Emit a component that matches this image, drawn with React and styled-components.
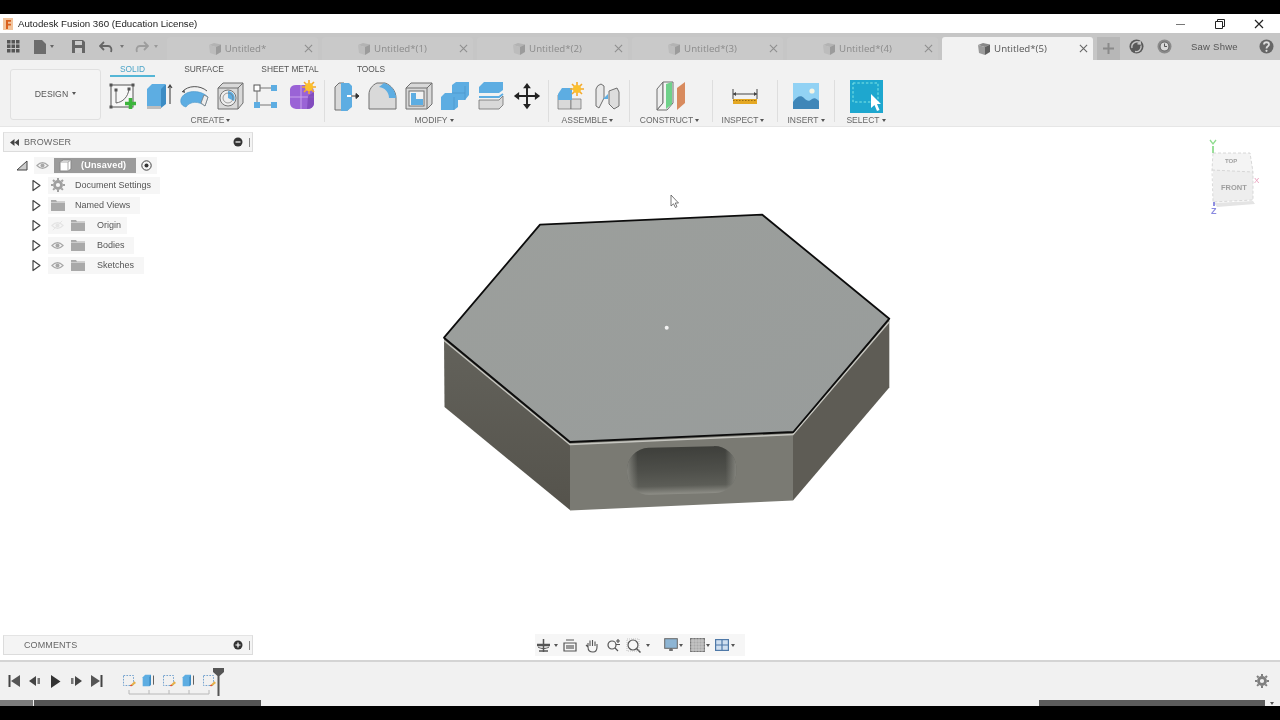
import React from "react";
import styled, { createGlobalStyle } from "styled-components";

const Global = createGlobalStyle`
  html, body { margin: 0; padding: 0; background: #000; overflow: hidden; }
  #root { width: 1280px; height: 720px; }
  * { box-sizing: border-box; }
`;

const Page = styled.div`
  width: 1280px; height: 720px; background: #000; display: flex; flex-direction: column;
  font-family: "Liberation Sans", Arial, sans-serif; filter: blur(0.35px);
`;
const BlackBand = styled.div`height: ${p => p.$h}px; background: #000; flex: none;`;

const TitleBar = styled.header`
  height: 19px; background: #fff; display: flex; align-items: center; padding: 0 0 0 3px; flex: none;
`;
const AppTitle = styled.span`
  font-family: "Liberation Sans", sans-serif; font-size: 9.7px; color: #222; margin-left: 5px; flex: 1;
`;
const WinBtn = styled.button`
  width: 39px; height: 19px; border: 0; padding: 0; background: none; display: flex;
  align-items: center; justify-content: center;
`;
const WinControls = styled.div`display: flex; margin-right: 2px;`;

const TabBar = styled.div`
  height: 27px; background: #c6c6c6; display: flex; align-items: flex-end; flex: none; position: relative;
`;
const QuickTools = styled.div`
  width: 167px; height: 27px; display: flex; align-items: center; padding-left: 7px; flex: none;
`;
const QuickItem = styled.span`display: flex; align-items: center; margin-left: ${p => p.$ml || 0}px;`;
const Tabs = styled.div`display: flex; gap: 4px; align-items: flex-end;`;
const Tab = styled.div`
  width: 151px; height: 23px; border-radius: 3px 3px 0 0;
  background: ${p => (p.$active ? "#f2f2f2" : "#c9c9c9")};
  display: grid; grid-template-columns: 140px 11px; align-items: center;
`;
const TabMain = styled.div`
  display: flex; align-items: center; justify-content: center; gap: 3px;
  font-size: 9.7px; font-family: "Open Sans", sans-serif;
  color: ${p => (p.$active ? "#555" : "#8b8b8b")};
`;
const TabClose = styled.span`display: flex; margin-left: -3px;`;
const PlusBox = styled.div`
  width: 23px; height: 23px; margin-left: 4px; background: #b7b7b7; display: flex;
  align-items: center; justify-content: center;
`;
const RightTools = styled.div`
  flex: 1; height: 27px; display: flex; align-items: center; padding-left: 9px;
`;
const UserName = styled.span`
  font-size: 9.5px; color: #555; letter-spacing: 0.25px; margin-left: 19px; width: 65px;
`;

const Ribbon = styled.section`
  height: 67px; background: #f2f2f2; display: flex; flex: none; border-bottom: 1px solid #e6e6e6;
  padding-left: 10px;
`;
const DesignBox = styled.button`
  width: 91px; height: 51px; margin-top: 9px; margin-right: 3px; background: #f4f4f4;
  border: 1px solid #e0e0e0; border-radius: 3px; display: flex; align-items: center; justify-content: center;
  gap: 4px; font: 8.7px "Liberation Sans", sans-serif; color: #555; padding: 0 0 2px;
`;
const RibbonBody = styled.div`display: flex; flex-direction: column; flex: 1;`;
const RibbonTabs = styled.div`display: flex; height: 17px; padding-left: 6px; margin-top: 2px;`;
const RibbonTab = styled.div`
  width: ${p => p.$w}px; height: 15px; font-size: 8.4px; line-height: 14px; text-align: center;
  color: ${p => (p.$active ? "#4ba4c8" : "#555")}; position: relative;
  ${p => p.$active && "border-bottom: 2px solid #55b6d6;"}
`;
const Groups = styled.div`display: flex; height: 46px; margin-top: 2px;`;
const Group = styled.div`
  width: ${p => p.$w}px; display: flex; flex-direction: column; align-items: center; flex: none;
`;
const GroupIcons = styled.div`display: flex; height: 32px; align-items: center;`;
const ToolSlot = styled.div`width: 36px; height: 32px; display: flex; align-items: center; justify-content: center;`;
const GroupLabel = styled.div`
  display: flex; align-items: center; gap: 2px; font-size: 8.5px; color: #666; margin: 2px ${p => p.$shift || 0}px 0 0;
  height: 12px; white-space: nowrap;
`;
const Caret = styled.i`
  display: inline-block; width: 0; height: 0; border-left: 2.5px solid transparent;
  border-right: 2.5px solid transparent; border-top: 3px solid ${p => p.$c || "#555"};
  margin-left: ${p => p.$ml || 0}px;
`;
const GroupDivider = styled.div`width: 1px; height: 42px; margin: 0 3px; background: #dedede; flex: none;`;

const Viewport = styled.main`
  height: 533px; background: #fff; position: relative; flex: none; display: flex; flex-direction: column;
  justify-content: space-between; padding: 5px 0 5px 3px;
`;
const ModelSvg = styled.svg`position: absolute; left: 0; top: 0; width: 1280px; height: 533px;`;
const PanelBar = styled.div`
  width: 250px; height: 20px; background: #f4f4f4; border: 1px solid #dcdcdc; border-top-color: #e4e4e4;
  display: flex; align-items: center; position: relative; font-size: 9px; color: #666; letter-spacing: 0.1px;
`;
const PanelLead = styled.span`width: 20px; display: flex; justify-content: center;`;
const PanelName = styled.span`flex: 1;`;
const PanelEnd = styled.span`display: flex; align-items: center; gap: 6px;`;
const Grip = styled.i`display: block; width: 1px; height: 9px; background: #888; margin-right: 2px;`;
const BrowserPanel = styled.div`position: relative; width: 250px;`;
const Tree = styled.div`margin-top: 3px; display: flex; flex-direction: column;`;
const TreeRow = styled.div`
  height: 20px; display: flex; align-items: center; padding-left: ${p => p.$indent}px;
`;
const Pill = styled.div`
  height: 17px; width: ${p => p.$w}px; background: #f6f6f6; display: flex; align-items: center;
  font-size: 9px; color: #555; margin-left: ${p => p.$ml}px;
`;
const IconCell = styled.span`width: ${p => p.$w}px; display: flex; justify-content: center; flex: none;`;
const Selected = styled.div`
  width: 82px; height: 15px; margin: 0 2px 0 4px; background: #9b9b9b; display: flex; align-items: center; color: #fff;
  font-weight: bold; font-size: 9px; letter-spacing: 0.2px; flex: none;
`;

const NavBar = styled.div`
  position: absolute; left: 535px; bottom: 4px; width: 210px; height: 22px; background: #f6f6f6;
  display: flex; align-items: center;
`;
const NavItem = styled.span`
  width: ${p => p.$w}px; padding-left: ${p => p.$pl || 0}px; display: flex; align-items: center;
  justify-content: ${p => (p.$pl ? "flex-start" : "center")}; flex: none;
`;
const Cube = styled.svg`position: absolute; left: 1205px; top: 10px; width: 60px; height: 82px; filter: blur(0.6px);`;

const Timeline = styled.footer`
  height: 40px; background: #f1f1f1; border-top: 2px solid #d4d4d4; display: flex; align-items: center; flex: none; padding-left: 4px;
`;
const Player = styled.div`display: flex; width: 114px;`;
const PlayBtn = styled.span`width: 20.7px; display: flex; justify-content: center;`;
const Features = styled.div`position: relative; display: flex; height: 36px; align-items: flex-start; padding-top: 10px;`;
const Feature = styled.span`width: 20px; display: flex; justify-content: center;`;
const Bracket = styled.svg`position: absolute; left: 10px; top: 27px;`;
const Marker = styled.svg`margin-left: -5px; margin-top: -5px;`;
const GearEnd = styled.span`margin-left: auto; margin-right: 11px; display: flex;`;

const ScrollRow = styled.div`height: 6px; background: #f1f1f1; display: flex; align-items: center; flex: none;`;
const Thumb = styled.div`
  width: ${p => p.$w}px; height: 6px; background: ${p => p.$c}; margin-left: ${p => p.$ml || 0}px; flex: none;
`;

/* ---------- drawings ---------- */
const S = ({ size = 32, vb = 32, children }) => (
  <svg width={size} height={size} viewBox={`0 0 ${vb} ${vb}`}>{children}</svg>
);
const BLUE = "#5dade2", GR = "#d9d9d9", LN = "#6f6f6f";

const Sketch = () => (
  <S><rect x="4" y="5" width="22" height="22" fill="#f7f7f7" stroke="#555" strokeWidth="1" />
    <path d="M9 10v13 M9 23 C16 22 21 17 22 9" fill="none" stroke="#666" strokeWidth="1" />
    {[[4, 5], [26, 5], [4, 27], [9, 10], [22, 9]].map(([x, y]) => <rect key={x + "-" + y} x={x - 1.5} y={y - 1.5} width="3" height="3" fill="#555" />)}
    <path d="M23.5 18v11 M18 23.5h11" stroke="#3cb43c" strokeWidth="3.6" /></S>
);
const Extrude = () => (
  <S><path d="M4 9 L9 4 H22 V24 L18 27 H4Z" fill={BLUE} /><path d="M18 9 L23 4 V24 L18 28Z" fill="#3c8cc4" />
    <path d="M4 26h14v3H4Z" fill="#bdbdbd" /><path d="M27 24V6 M25 8l2-3 2 3" stroke="#444" strokeWidth="1.1" fill="none" /></S>
);
const Revolve = () => (
  <S><path d="M2 19 C5 10 21 9 29 17 L26 26 C20 21 11 21 7 27 C3 26 1 23 2 19Z" fill={BLUE} stroke="#4a95c8" strokeWidth=".6" />
    <path d="M29 17 L26 26 L22 23 L25 15Z" fill="#eee" stroke="#777" strokeWidth=".8" />
    <path d="M3 12 C9 5 21 5 28 11" fill="none" stroke="#555" strokeWidth="1" /><path d="M3 12l2.500-2.500 .5 3.500z" fill="#555" /></S>
);
const Hole = () => (
  <S><path d="M3 8 L8 3 H28 V23 L23 29 H3Z" fill={GR} stroke={LN} /><path d="M3 8H23V29 M23 8L28 3" fill="none" stroke={LN} />
    <circle cx="13" cy="18" r="8" fill="#eee" stroke="#777" /><path d="M13 11a7 7 0 0 1 6 10 L13 18Z" fill={BLUE} /><circle cx="13" cy="18" r="5" fill="none" stroke="#777" strokeWidth=".7" /></S>
);
const Pattern = () => (
  <S><rect x="3" y="5" width="6" height="6" fill="#fff" stroke="#555" />
    <rect x="20" y="5" width="6" height="6" fill={BLUE} /><rect x="3" y="22" width="6" height="6" fill={BLUE} /><rect x="20" y="22" width="6" height="6" fill={BLUE} />
    <path d="M9 8h11 M6 11v11 M9 25h11" stroke="#777" strokeWidth="1" /></S>
);
const Form = () => (
  <S><path d="M3 9 Q4 5 9 5 H21 Q27 6 27 12 V24 Q26 29 20 29 H9 Q3 28 3 23Z" fill="#9a63d6" />
    <path d="M3 17H27 M14 5V29" stroke="#c8a3ec" strokeWidth="1" /><path d="M21 16 L27 12 V24 Q26 29 20 29Z" fill="#7c46b8" opacity=".8" />
    <g stroke="#f4a92a" strokeWidth="1.6"><path d="M22 0V14 M15 7H29 M17 2l10 10 M27 2L17 12" /></g><circle cx="22" cy="7" r="4" fill="#fbc02d" /></S>
);
const PressPull = () => (
  <S><path d="M4 7 L8 3 H13 L17 7 V30 H4Z" fill={GR} stroke={LN} /><path d="M10 3 H18 L21 6 V27 L16 31 H10Z" fill={BLUE} />
    <path d="M16 16h8" stroke="#fff" strokeWidth="2" /><path d="M20 16h6 M28 16l-3-2.500v5z" stroke="#333" strokeWidth="1" fill="#333" /></S>
);
const Fillet = () => (
  <S><path d="M2 29 V14 C2 10 5 5 10 3 H18 C24 5 29 11 29 18 V29Z" fill={GR} stroke={LN} />
    <path d="M17 3 C24 5 29 11 29 18 H22 C22 12 18 8 12 7Z" fill={BLUE} /></S>
);
const Shell = () => (
  <S><path d="M3 8 L8 3 H29 V24 L24 29 H3Z" fill={GR} stroke={LN} /><path d="M3 8H24V29 M24 8L29 3" fill="none" stroke={LN} />
    <rect x="6" y="11" width="15" height="15" fill="#f3f3f3" stroke={LN} /><path d="M8 13h5v6h7v6H8Z" fill={BLUE} /></S>
);
const Combine = () => (
  <S><path d="M2 17 L6 13 H13 V5 L17 2 H30 V15 L26 20 H19 V27 L15 30 H2Z" fill={BLUE} /><path d="M26 6V20 M13 13H26 M15 17V30" stroke="#4a95c8" strokeWidth=".7" fill="none" /></S>
);
const SplitFace = () => (
  <S><path d="M4 7 L9 2 H28 V10 L24 13 H4Z" fill={BLUE} /><path d="M4 17H24L28 14" fill="none" stroke={BLUE} strokeWidth="1.8" />
    <path d="M4 20H24L28 16 V25 L24 29 H4Z" fill={GR} stroke={LN} strokeWidth=".8" /></S>
);
const MoveIco = () => (
  <S size={28} vb={32}><path d="M16 3V29 M3 16H29" stroke="#222" strokeWidth="2.200" /><path d="M16 1l4.500 6h-9z M16 31l4.500-6h-9z M1 16l6-4.500v9z M31 16l-6-4.500v9z" fill="#222" /></S>
);
const NewComp = () => (
  <S><path d="M3 15 L6 12 H16 V29 H3Z" fill={GR} stroke={LN} strokeWidth=".7" /><path d="M16 19H26V29H16Z" fill={GR} stroke={LN} strokeWidth=".7" />
    <path d="M3 14 L7 8 H17 V20 H3Z" fill={BLUE} />
    <g stroke="#f4a92a" strokeWidth="1.6"><path d="M22 2V16 M15 9H29 M17 4l10 10 M27 4L17 14" /></g><circle cx="22" cy="9" r="4" fill="#fbc02d" /></S>
);
const Joint = () => (
  <S><path d="M5 9 Q6 5 10 4 L13 6 V18 L8 28 L5 26Z" fill="#e8e8e8" stroke={LN} /><path d="M26 8 L18 11 V24 L23 29 L28 26 V12Z" fill="#ddd" stroke={LN} />
    <path d="M12 19l5-5 v5z" fill={BLUE} /></S>
);
const Plane = () => (
  <S size={34} vb={34}><path d="M3 10 L9 3 V24 L3 31Z" fill="#efefef" stroke={LN} /><path d="M3 31 H13 L19 24 V3 L9 3 V24 L3 31Z" fill="#f4f4f4" stroke={LN} />
    <path d="M12 5 L18 3 V25 L12 30Z" fill="#6fd18a" /><path d="M23 9 L31 3 V24 L23 31Z" fill="#d88b5e" /></S>
);
const Measure = () => (
  <S><path d="M4 9v10 M28 9v10 M4 14H28" stroke="#444" strokeWidth="1" /><path d="M4 14l3-2v4z M28 14l-3-2v4z" fill="#444" />
    <rect x="4" y="19" width="24" height="5" fill="#e5a823" /><path d="M4 20.500H28" stroke="#9a6d0e" strokeWidth="1" strokeDasharray="1.500 1.500" /></S>
);
const Picture = () => (
  <S size={26} vb={26}><rect x="0" y="0" width="26" height="26" fill="#92d2f4" /><circle cx="19" cy="8" r="2.600" fill="#f4f4e4" />
    <path d="M0 26 V19 C4 13 8 12 11 15 C14 18 16 19 19 16 C22 14 24 16 26 18 V26Z" fill="#3f86b8" /></S>
);
const SelectIco = () => (
  <svg width="33" height="33" viewBox="0 0 33 33"><rect width="33" height="33" fill="#1ea7cf" />
    <rect x="3" y="3" width="25" height="19" fill="none" stroke="#7fe6e6" strokeWidth="1" strokeDasharray="2.500 1.800" />
    <path d="M21 14 V28 L24.500 25 L27 31 L29.500 30 L27 24 H31Z" fill="#fff" /></svg>
);
const TabCube = ({ dark }) => (
  <S size={14} vb={14}><path d="M1 3 L6 1 L13 2.500 L8 5Z" fill={dark ? "#888" : "#b3b3b3"} /><path d="M1 3 L8 5 V13 L2 11Z" fill={dark ? "#9a9a9a" : "#bcbcbc"} /><path d="M8 5 L13 2.500 V10 L8 13Z" fill={dark ? "#5e5e5e" : "#9b9b9b"} /></S>
);
const CloseX = ({ c = "#8f8f8f", s = 9 }) => (
  <S size={s} vb={10}><path d="M1 1L9 9M9 1L1 9" stroke={c} strokeWidth="1.200" /></S>
);
const AppLogo = () => (
  <svg width="10" height="12" viewBox="0 0 10 12"><rect width="10" height="12" fill="#f2c49c" /><path d="M3 2h5v1.800H5v2h3v1.700H5V11H3Z" fill="#d9601e" /></svg>
);
const Eye = ({ off }) => (
  <S size={13} vb={14}><path d="M1 7 Q7 1 13 7 Q7 13 1 7Z" fill="none" stroke={off ? "#e4e4e4" : "#a8a8a8"} strokeWidth="1.200" /><circle cx="7" cy="7" r="2.200" fill={off ? "#e4e4e4" : "#a8a8a8"} />{off && <path d="M2 12L12 2" stroke="#e4e4e4" />}</S>
);
const Folder = () => (
  <svg width="14" height="11" viewBox="0 0 14 11"><path d="M0 0H5L6 1.500H14V11H0Z" fill="#a9a9a9" /><path d="M0 2.400H14" stroke="#e2e2e2" strokeWidth=".7" /></svg>
);
const Gear = ({ s = 14, c = "#a0a0a0" }) => (
  <S size={s} vb={14}><circle cx="7" cy="7" r="3.500" fill="none" stroke={c} strokeWidth="2.800" /><path d="M7 0V14M0 7H14M2 2L12 12M12 2L2 12" stroke={c} strokeWidth="2" strokeDasharray="2.200 9.600 2.200" /></S>
);
const TreeArrow = () => (
  <svg width="11" height="13" viewBox="0 0 11 13"><path d="M2 1.500 L9 6.500 L2 11.500Z" fill="#fff" stroke="#444" strokeWidth="1.200" strokeLinejoin="round" /></svg>
);
const DiscBtn = ({ minus }) => (
  <S size={10} vb={10}><circle cx="5" cy="5" r="4.500" fill="#333" /><path d={minus ? "M2.500 5h5" : "M2.500 5h5M5 2.500v5"} stroke="#fff" strokeWidth="1.200" /></S>
);
const TlSketch = () => (
  <S size={15} vb={18}><rect x="3" y="3" width="12" height="12" fill="none" stroke="#5b93c8" strokeDasharray="2 1.500" />
    <path d="M11 15 L16 10 L18 12 L13 16Z" fill="#e6b04a" /><circle cx="12" cy="15" r="1" fill="#d33" /></S>
);
const TlExtrude = () => (
  <S size={15} vb={18}><path d="M2 5 L5 2 H12 V14 L10 16 H2Z" fill={BLUE} /><path d="M10 5 L12 2 V14 L10 16Z" fill="#3c8cc4" /><path d="M15 14V3" stroke="#444" /></S>
);

const rows = [
  { name: "Document Settings", w: 112, lead: <IconCell $w={19}><Gear /></IconCell> },
  { name: "Named Views", w: 92, lead: <IconCell $w={19}><Folder /></IconCell> },
  { name: "Origin", w: 79, lead: <><IconCell $w={19}><Eye off /></IconCell><IconCell $w={22}><Folder /></IconCell></> },
  { name: "Bodies", w: 86, lead: <><IconCell $w={19}><Eye /></IconCell><IconCell $w={22}><Folder /></IconCell></> },
  { name: "Sketches", w: 96, lead: <><IconCell $w={19}><Eye /></IconCell><IconCell $w={22}><Folder /></IconCell></> },
];
const RowText = styled.span`margin-left: ${p => p.$ml}px; white-space: nowrap;`;

const groups = [
  { w: 217, label: "CREATE", shift: 4, tools: [Sketch, Extrude, Revolve, Hole, Pattern, Form] },
  { w: 217, label: "MODIFY", shift: 5, tools: [PressPull, Fillet, Shell, Combine, SplitFace, MoveIco] },
  { w: 74, label: "ASSEMBLE", shift: 3, tools: [NewComp, Joint] },
  { w: 76, label: "CONSTRUCT", shift: 3, tools: [Plane] },
  { w: 58, label: "INSPECT", shift: 4, tools: [Measure] },
  { w: 50, label: "INSERT", tools: [Picture] },
  { w: 56, label: "SELECT", tools: [SelectIco] },
];
const tabs = ["Untitled*", "Untitled*(1)", "Untitled*(2)", "Untitled*(3)", "Untitled*(4)", "Untitled*(5)"];

export default function App() {
  return (
    <Page>
      <Global />
      <BlackBand $h={14} />
      <TitleBar>
        <AppLogo />
        <AppTitle>Autodesk Fusion 360 (Education License)</AppTitle>
        <WinControls>
          <WinBtn><svg width="10" height="10"><path d="M0 5.500H9" stroke="#777" /></svg></WinBtn>
          <WinBtn><svg width="10" height="10"><path d="M.5 2.500H7.500V9.500H.5Z M2.500 2.500V.5H9.500V7.500H7.500" fill="none" stroke="#222" /></svg></WinBtn>
          <WinBtn><CloseX c="#222" s={10} /></WinBtn>
        </WinControls>
      </TitleBar>

      <TabBar>
        <QuickTools>
          <QuickItem>
            <svg width="13" height="13" viewBox="0 0 13 13" fill="#555">{[0, 4.500, 9].flatMap(y => [0, 4.500, 9].map(x => <rect key={x + "-" + y} x={x} y={y} width="3.500" height="3.500" />))}</svg>
          </QuickItem>
          <QuickItem $ml={14}><svg width="12" height="14" viewBox="0 0 12 14"><path d="M0 0H8L12 4V14H0Z" fill="#6c6c6c" /></svg><Caret $ml={4} $c="#666" /></QuickItem>
          <QuickItem $ml={18}><svg width="13" height="13" viewBox="0 0 13 13"><path d="M0 0H11L13 2V13H0Z" fill="#666" /><rect x="3" y="1" width="7" height="4" fill="#ccc" /><rect x="3" y="8" width="7" height="5" fill="#ccc" /></svg></QuickItem>
          <QuickItem $ml={14}><svg width="14" height="12" viewBox="0 0 14 12"><path d="M5 1L1 5L5 9M1 5H9C12 5 13 8 12 11" fill="none" stroke="#666" strokeWidth="1.800" /></svg><Caret $ml={7} $c="#777" /></QuickItem>
          <QuickItem $ml={11}><svg width="14" height="12" viewBox="0 0 14 12"><path d="M9 1L13 5L9 9M13 5H5C2 5 1 8 2 11" fill="none" stroke="#9d9d9d" strokeWidth="1.800" /></svg><Caret $ml={5} $c="#999" /></QuickItem>
        </QuickTools>
        <Tabs>
          {tabs.map((t, i) => {
            const active = i === 5;
            return (
              <Tab key={t} $active={active}>
                <TabMain $active={active}><TabCube dark={active} />{t}</TabMain>
                <TabClose><CloseX c={active ? "#666" : "#8f8f8f"} /></TabClose>
              </Tab>
            );
          })}
        </Tabs>
        <PlusBox><svg width="11" height="11"><path d="M5.500 0V11M0 5.500H11" stroke="#8a8a8a" strokeWidth="2" /></svg></PlusBox>
        <RightTools>
          <S size={15} vb={15}><circle cx="7.500" cy="7.500" r="7" fill="#595959" /><path d="M3 9a5 5 0 0 1 8-5M11 2l.5 3-3-.2M12 6.500a5 5 0 0 1-6 6" fill="none" stroke="#c6c6c6" strokeWidth="1.400" /></S>
          <QuickItem $ml={13}><S size={15} vb={15}><circle cx="7.500" cy="7.500" r="7" fill="#8a8a8a" /><circle cx="7.500" cy="7.500" r="4.500" fill="#d8d8d8" stroke="#666" strokeWidth="1.200" /><path d="M7.500 4.500V7.500H10" stroke="#555" fill="none" /></S></QuickItem>
          <UserName>Saw Shwe</UserName>
          <QuickItem $ml={3}><S size={15} vb={15}><circle cx="7.500" cy="7.500" r="7" fill="#666" /><path d="M5 5.500C5 2.500 10 2.500 10 5.500C10 7.500 7.500 7 7.500 9.500" fill="none" stroke="#ddd" strokeWidth="1.800" /><circle cx="7.500" cy="11.800" r="1.100" fill="#ddd" /></S></QuickItem>
        </RightTools>
      </TabBar>

      <Ribbon>
        <DesignBox>DESIGN <Caret /></DesignBox>
        <RibbonBody>
          <RibbonTabs>
            <RibbonTab $w={45} $active>SOLID</RibbonTab>
            <RibbonTab $w={98}>SURFACE</RibbonTab>
            <RibbonTab $w={74}>SHEET METAL</RibbonTab>
            <RibbonTab $w={88}>TOOLS</RibbonTab>
          </RibbonTabs>
          <Groups>
            {groups.map((g, i) => (
              <React.Fragment key={g.label}>
                <Group $w={g.w}>
                  <GroupIcons>{g.tools.map((T, k) => <ToolSlot key={k}><T /></ToolSlot>)}</GroupIcons>
                  <GroupLabel $shift={g.shift}>{g.label}<Caret /></GroupLabel>
                </Group>
                {i < groups.length - 1 && <GroupDivider />}
              </React.Fragment>
            ))}
          </Groups>
        </RibbonBody>
      </Ribbon>

      <Viewport>
        <ModelSvg viewBox="0 127 1280 533">
          <defs>
            <linearGradient id="topFace" x1="0" y1="0" x2="1" y2="1"><stop offset="0" stopColor="#9c9f9c" /><stop offset="1" stopColor="#989c9b" /></linearGradient>
            <linearGradient id="leftFace" x1="0" y1="0" x2="0" y2="1"><stop offset="0" stopColor="#63625b" /><stop offset="1" stopColor="#55534c" /></linearGradient>
            <linearGradient id="slot" x1="0" y1="0" x2="0" y2="1"><stop offset="0" stopColor="#3e3f3b" /><stop offset=".5" stopColor="#4e4f4a" /><stop offset=".82" stopColor="#5c5d57" /><stop offset="1" stopColor="#8f8f88" /></linearGradient>
            <linearGradient id="slotEnds" x1="0" y1="0" x2="1" y2="0"><stop offset="0" stopColor="#94948d" stopOpacity=".75" /><stop offset=".1" stopColor="#94948d" stopOpacity="0" /><stop offset=".9" stopColor="#94948d" stopOpacity="0" /><stop offset="1" stopColor="#94948d" stopOpacity=".75" /></linearGradient>
          </defs>
          <path d="M444 338 L570 442 V510 L444.500 407Z" fill="url(#leftFace)" />
          <path d="M570 442 L793 432 V500.500 L570 510.500Z" fill="#7a7a73" />
          <path d="M793 432 L889.300 319 V387.500 L793 500.500Z" fill="#5e5c55" />
          <rect x="627" y="447" width="109.500" height="47" rx="22" fill="url(#slot)" transform="rotate(-1.500 681 470)" />
          <rect x="627" y="447" width="109.500" height="47" rx="22" fill="url(#slotEnds)" transform="rotate(-1.500 681 470)" />
          <path d="M444 340.500 L570 444.500 L793 434.500 L889 322" fill="none" stroke="#c6c6c0" strokeWidth="1.400" />
          <path d="M540 224.700 L762.300 214.700 L889.300 318.700 L793.300 432 L570 442 L444 337.700Z" fill="url(#topFace)" stroke="#0c0c0c" strokeWidth="1.800" strokeLinejoin="round" />
          <circle cx="666.700" cy="327.800" r="2" fill="#f2f2f2" />
          <path d="M671 195 V206 L673.500 203.800 L675.400 207.500 L677 206.600 L675.200 203 H678.500Z" fill="#fff" stroke="#555" strokeWidth=".8" />
        </ModelSvg>

        <BrowserPanel>
          <PanelBar>
            <PanelLead><svg width="9" height="7" viewBox="0 0 9 7"><path d="M4.500 0V7L0 3.500Z M9 0V7L4.500 3.500Z" fill="#444" /></svg></PanelLead>
            <PanelName>BROWSER</PanelName>
            <PanelEnd><DiscBtn minus /><Grip /></PanelEnd>
          </PanelBar>
          <Tree>
            <TreeRow $indent={13}>
              <svg width="12" height="11" viewBox="0 0 12 11"><path d="M1 10 L11 1 V10Z" fill="#ccc" stroke="#444" /></svg>
              <Pill $w={123} $ml={6}>
                <IconCell $w={16}><Eye /></IconCell>
                <Selected>
                  <IconCell $w={22}><svg width="13" height="13" viewBox="0 0 13 13"><path d="M1 3 L4 1 H12 V10 L9 12 H1Z" fill="#fff" stroke="#888" /><path d="M9 3V12 M1 3H9L12 1" stroke="#aaa" fill="none" /></svg></IconCell>
                  <RowText $ml={5}>(Unsaved)</RowText>
                </Selected>
                <IconCell $w={16}><svg width="11" height="11" viewBox="0 0 11 11"><circle cx="5.500" cy="5.500" r="4.700" fill="none" stroke="#444" /><circle cx="5.500" cy="5.500" r="2" fill="#333" /></svg></IconCell>
              </Pill>
            </TreeRow>
            {rows.map(r => (
              <TreeRow $indent={28} key={r.name}>
                <TreeArrow />
                <Pill $w={r.w} $ml={6}>
                  {r.lead}
                  <RowText $ml={8}>{r.name}</RowText>
                </Pill>
              </TreeRow>
            ))}
          </Tree>
        </BrowserPanel>

        <PanelBar>
          <PanelLead />
          <PanelName>COMMENTS</PanelName>
          <PanelEnd><DiscBtn /><Grip /></PanelEnd>
        </PanelBar>

        <Cube viewBox="0 0 60 82">
          <path d="M8 16 L45 16 L48 35 L48 63 L8 65Z" fill="#eeeeee" />
          <path d="M8 16 L45 16 L48 35 L7 33Z" fill="#f4f4f4" />
          <path d="M9 66 L48 64 L50 67 L12 70Z" fill="#e4e4e4" />
          <path d="M8 16 L45 16 L48 35 L48 63 L8 65 L7 33 L8 16 M7 33 L48 35" fill="none" stroke="#cfcfcf" strokeDasharray="3 2" strokeWidth=".8" />
          <path d="M8 16V9" stroke="#8fdc8f" strokeWidth="1.800" /><path d="M9 65V69" stroke="#6a6ad8" strokeWidth="1.500" />
          <path d="M5 3l3 4 3-4" stroke="#8fdc8f" fill="none" strokeWidth="1.300" />
          <text x="49" y="46" fontSize="8" fill="#e79ab8" fontFamily="Liberation Sans">X</text>
          <text x="6" y="77" fontSize="9" fontWeight="bold" fill="#8a8ae0" fontFamily="Liberation Sans">Z</text>
          <text x="20" y="26" fontSize="6" fontWeight="bold" fill="#a0a0a0" fontFamily="Liberation Sans">TOP</text>
          <text x="16" y="53" fontSize="7.500" fontWeight="bold" fill="#9e9e9e" fontFamily="Liberation Sans">FRONT</text>
        </Cube>

        <NavBar>
          <NavItem $w={26} $pl={1}>
            <svg width="15" height="15" viewBox="0 0 15 15"><path d="M7.500 1V14M3 13h9" stroke="#555" strokeWidth="1.500" /><path d="M1 7h13" stroke="#555" strokeWidth="2.500" /><path d="M2 9 C5 11 10 11 13 9" stroke="#555" fill="none" /></svg>
            <Caret $ml={3} />
          </NavItem>
          <NavItem $w={18}><svg width="14" height="13" viewBox="0 0 14 13"><path d="M1 4H13V12H1Z M3 1H11" fill="none" stroke="#555" strokeWidth="1.200" /><rect x="3" y="6" width="8" height="4" fill="#999" /></svg></NavItem>
          <NavItem $w={26}><svg width="14" height="15" viewBox="0 0 14 15"><path d="M3 9V5M5 8V2.500M7.500 8V2M10 8V3.500M12 9V6 M3 9 C3 13 5 14 8 14 C11 14 12 12 12 9 M3 9L1 7" fill="none" stroke="#555" strokeWidth="1.100" /></svg></NavItem>
          <NavItem $w={16}><svg width="15" height="14" viewBox="0 0 15 14"><circle cx="6" cy="7" r="4" fill="none" stroke="#555" strokeWidth="1.200" /><path d="M9 10l3 3M12 1v4M10 3h4M10 6.500h4" stroke="#555" strokeWidth="1.200" /></svg></NavItem>
          <NavItem $w={34} $pl={5}><svg width="16" height="15" viewBox="0 0 16 15"><circle cx="7" cy="7" r="5" fill="none" stroke="#555" strokeWidth="1.200" /><path d="M10.500 10.500l4 4" stroke="#555" strokeWidth="1.500" /><rect x="1" y="1" width="12" height="12" fill="none" stroke="#aaa" strokeDasharray="1 1" strokeWidth=".7" /></svg><Caret $ml={4} /></NavItem>
          <NavItem $w={31} $pl={9}><svg width="14" height="14" viewBox="0 0 14 14"><rect x=".7" y=".7" width="12.600" height="9.600" fill="#8db5d4" stroke="#666" /><path d="M5 12h4M7 10v3" stroke="#666" strokeWidth="1.400" /></svg><Caret $ml={1} /></NavItem>
          <NavItem $w={25} $pl={4}><svg width="15" height="14" viewBox="0 0 15 14"><rect x=".5" y=".5" width="14" height="13" fill="#aaa" stroke="#777" /><path d="M3 0V14M6 0V14M9 0V14M12 0V14M0 3H15M0 6H15M0 9H15M0 12H15" stroke="#ddd" strokeWidth=".5" /></svg><Caret $ml={1} /></NavItem>
          <NavItem $w={26} $pl={4}><svg width="14" height="12" viewBox="0 0 14 12"><rect x=".6" y=".6" width="12.800" height="10.800" fill="#cfdff0" stroke="#4f79a8" strokeWidth="1.200" /><path d="M7 0V12M0 6H14" stroke="#4f79a8" strokeWidth="1.200" /></svg><Caret $ml={2} /></NavItem>
        </NavBar>
      </Viewport>

      <Timeline>
        <Player>
          <PlayBtn><svg width="12" height="12" viewBox="0 0 12 12"><path d="M1.500 0V12" stroke="#444" strokeWidth="2" /><path d="M12 0V12L3 6Z" fill="#555" /></svg></PlayBtn>
          <PlayBtn><svg width="12" height="12" viewBox="0 0 12 12"><path d="M7 1V11L0 6Z" fill="#444" /><rect x="8.500" y="3" width="2.500" height="6" fill="#777" /></svg></PlayBtn>
          <PlayBtn><svg width="11" height="13" viewBox="0 0 11 13"><path d="M1 0V13L10.500 6.500Z" fill="#333" /></svg></PlayBtn>
          <PlayBtn><svg width="12" height="12" viewBox="0 0 12 12"><path d="M5 1V11L12 6Z" fill="#444" /><rect x="1" y="3" width="2.500" height="6" fill="#777" /></svg></PlayBtn>
          <PlayBtn><svg width="12" height="12" viewBox="0 0 12 12"><path d="M10.500 0V12" stroke="#444" strokeWidth="2" /><path d="M0 0V12L9 6Z" fill="#555" /></svg></PlayBtn>
        </Player>
        <Features>
          <Feature><TlSketch /></Feature><Feature><TlExtrude /></Feature><Feature><TlSketch /></Feature><Feature><TlExtrude /></Feature><Feature><TlSketch /></Feature>
          <Marker width="11" height="28" viewBox="0 0 11 28"><path d="M0 0H11V4L6.500 8V28H4.500V8L0 4Z" fill="#555" /></Marker>
          <Bracket width="82" height="5" viewBox="0 0 82 5"><path d="M1 0V4H81V0M21 0V4M41 0V4M61 0V4" stroke="#b8b8b8" fill="none" /></Bracket>
        </Features>
        <GearEnd><Gear s={14} c="#808080" /></GearEnd>
      </Timeline>
      <ScrollRow>
        <Thumb $w={33} $c="#7c7c7c" />
        <Thumb $w={227} $ml={1} $c="#555" />
        <Thumb $w={226} $ml={778} $c="#5c5c5c" />
        <Caret $ml={5} />
      </ScrollRow>
      <BlackBand $h={14} />
    </Page>
  );
}
